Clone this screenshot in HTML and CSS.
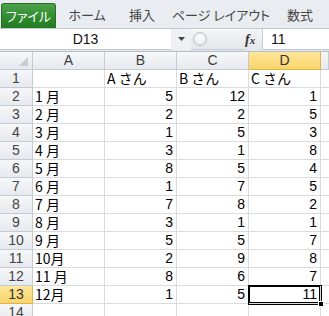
FILE: index.html
```html
<!DOCTYPE html>
<html lang="ja">
<head>
<meta charset="utf-8">
<link rel="stylesheet" href="styles.css">
</head>
<body>
<div class="app">
  <div class="tabs">
    <div class="tab file">ファイル</div>
    <div class="tab t2">ホーム</div>
    <div class="tab t3">挿入</div>
    <div class="tab t4">ページ レイアウト</div>
    <div class="tab t5">数式</div>
  </div>
  <div class="fbar">
    <div class="namebox">D13</div>
    <div class="dd"><svg width="7" height="4" viewBox="0 0 7 4"><path d="M0 0h7L3.5 4z" fill="#444"/></svg></div>
    <div class="pill"><span class="dot"></span></div>
    <div class="fx"><i>f</i><i class="x">x</i></div>
    <div class="fval">11</div>
  </div>
  <div class="gap"></div>
  <div class="sheet">
    <div class="h corner"><svg width="9" height="9" viewBox="0 0 9 9"><path d="M9 0V9H0z" fill="#c9ccd1"/></svg></div>
    <div class="h col">A</div><div class="h col">B</div><div class="h col">C</div><div class="h col sel">D</div><div class="h col last"></div>

    <div class="h row">1</div><div class="c"></div><div class="c">A さん</div><div class="c">B さん</div><div class="c">C さん</div><div class="c last"></div>
    <div class="h row">2</div><div class="c">1 月</div><div class="c n">5</div><div class="c n">12</div><div class="c n">1</div><div class="c last"></div>
    <div class="h row">3</div><div class="c">2 月</div><div class="c n">2</div><div class="c n">2</div><div class="c n">5</div><div class="c last"></div>
    <div class="h row">4</div><div class="c">3 月</div><div class="c n">1</div><div class="c n">5</div><div class="c n">3</div><div class="c last"></div>
    <div class="h row">5</div><div class="c">4 月</div><div class="c n">3</div><div class="c n">1</div><div class="c n">8</div><div class="c last"></div>
    <div class="h row">6</div><div class="c">5 月</div><div class="c n">8</div><div class="c n">5</div><div class="c n">4</div><div class="c last"></div>
    <div class="h row">7</div><div class="c">6 月</div><div class="c n">1</div><div class="c n">7</div><div class="c n">5</div><div class="c last"></div>
    <div class="h row">8</div><div class="c">7 月</div><div class="c n">7</div><div class="c n">8</div><div class="c n">2</div><div class="c last"></div>
    <div class="h row">9</div><div class="c">8 月</div><div class="c n">3</div><div class="c n">1</div><div class="c n">1</div><div class="c last"></div>
    <div class="h row">10</div><div class="c">9 月</div><div class="c n">5</div><div class="c n">5</div><div class="c n">7</div><div class="c last"></div>
    <div class="h row">11</div><div class="c">10月</div><div class="c n">2</div><div class="c n">9</div><div class="c n">8</div><div class="c last"></div>
    <div class="h row">12</div><div class="c">11 月</div><div class="c n">8</div><div class="c n">6</div><div class="c n">7</div><div class="c last"></div>
    <div class="h row sel">13</div><div class="c">12月</div><div class="c n">1</div><div class="c n">5</div><div class="c n active">11<span class="handle"></span></div><div class="c last"></div>
    <div class="h row">14</div><div class="c"></div><div class="c"></div><div class="c"></div><div class="c"></div><div class="c last"></div>
  </div>
</div>
</body>
</html>
```

FILE: styles.css
```css
* { box-sizing: border-box; }
html, body { margin: 0; padding: 0; }
body {
  width: 329px; height: 316px; overflow: hidden;
  background: #fff;
  font-family: "Noto Sans CJK JP", "Liberation Sans", sans-serif;
}
.app { width: 329px; height: 316px; overflow: hidden; }

.tabs {
  height: 29px;
  background: #e9ecf0;
  border-bottom: 1px solid #c5cad1;
  display: flex;
  align-items: flex-end;
  white-space: nowrap;
}
.tab {
  height: 25px;
  font-size: 13px;
  line-height: 24px;
  color: #444;
  text-align: center;
  flex: none;
  font-feature-settings: "palt";
}
.t2 { width: 62px; }
.t3 { width: 48px; }
.t4 { width: 110px; }
.t5 { width: 48px; }
.tab.file {
  margin-left: 1px;
  width: 55px;
  color: #fff;
  border-radius: 3px 3px 0 0;
  background: linear-gradient(#4da24a, #2d8a2c 60%, #237a23);
  border: 1px solid #2b6e2a;
  border-bottom: none;
}

.fbar {
  height: 21px;
  display: flex;
  align-items: center;
  background: #fff;
  border-bottom: 1px solid #c5cad1;
}
.namebox {
  width: 171px; height: 21px;
  text-align: center;
  font-family: "Liberation Sans", sans-serif;
  font-size: 14px; line-height: 21px; color: #111;
}
.dd { width: 20px; height: 21px; display: flex; align-items: center; justify-content: center; background: #eef0f3; }
.pill {
  width: 60px; height: 19px;
  display: flex; align-items: center;
  background: linear-gradient(#f4f5f7, #e4e7eb);
  padding-left: 2px;
}
.pill .dot {
  width: 14px; height: 14px; border-radius: 50%;
  border: 1px solid #b9bec6;
  background: radial-gradient(circle at 50% 40%, #fff, #dfe2e6);
}
.fx {
  width: 18px; height: 21px;
  margin-left: -6px;
  font-family: "Liberation Serif", serif;
  font-weight: bold; font-size: 14px; line-height: 21px; color: #333;
  background: linear-gradient(#f4f5f7, #e4e7eb);
  border-right: 1px solid #c5cad1;
  padding-right: 2px;
}
.fx .x { font-size: 11px; }
.fval {
  padding-left: 8px;
  font-family: "Liberation Sans", sans-serif;
  font-size: 14px; color: #111;
}
.gap { height: 2px; background: #e4e7eb; border-bottom: 1px solid #b8bec7; }

.sheet {
  display: grid;
  grid-template-columns: 33px 72px 72px 72px 72px 8px;
  grid-auto-rows: 18px;
}
.h {
  background: linear-gradient(#f6f7f9, #e6e9ee);
  border-right: 1px solid #c6cbd3;
  border-bottom: 1px solid #c6cbd3;
  color: #3e3e3e;
  font-family: "Liberation Sans", sans-serif;
  font-size: 14px;
  line-height: 17px;
  text-align: center;
}
.h.row { color: #444; }
.h.sel {
  background: linear-gradient(#fde69a, #f9d46a);
  border-color: #e0b44a;
  color: #333;
}
.h.corner { display: flex; align-items: flex-end; justify-content: flex-end; padding: 0 4px 3px 0; }
.c {
  border-right: 1px solid #d9dcdf;
  border-bottom: 1px solid #d9dcdf;
  font-size: 14px;
  line-height: 17px;
  padding: 0 2px;
  color: #000;
  white-space: nowrap;
}
.c.n { text-align: right; padding-right: 3px; font-family: "Liberation Sans", sans-serif; }
.c.last { border-right: none; }
.c.active {
  position: relative;
  box-shadow: 0 0 0 1px #000, inset 0 0 0 1px #000;
}
.handle {
  position: absolute; right: -4px; bottom: -4px;
  width: 6px; height: 6px; background: #000; border: 1px solid #fff;
}
```
